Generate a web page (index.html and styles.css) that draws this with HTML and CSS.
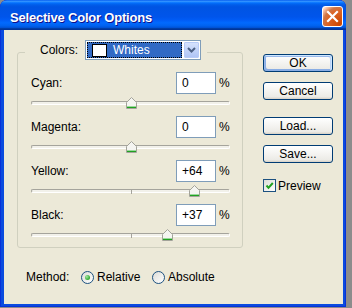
FILE: index.html
```html
<!DOCTYPE html>
<html>
<head>
<meta charset="utf-8">
<title>Selective Color Options</title>
<link rel="stylesheet" href="styles.css">
</head>
<body>
<div class="window">
  <div class="titlebar">
    <span class="title">Selective Color Options</span>
    <span class="close"><svg width="21" height="21" viewBox="0 0 21 21"><path d="M6 6 L15 15 M15 6 L6 15" stroke="#fff" stroke-width="2.2" stroke-linecap="square"/></svg></span>
  </div>
  <div class="client">
    <div class="top">
      <fieldset class="group">
        <legend class="legend">
          <span class="legend-label">Colors:</span>
          <span class="combo">
            <span class="combo-sel"><span class="swatch"></span><span class="combo-text">Whites</span></span>
            <span class="combo-btn"><svg width="9" height="6" viewBox="0 0 9 6"><path d="M1 1 L4.5 4.5 L8 1" fill="none" stroke="#4D6185" stroke-width="2"/></svg></span>
          </span>
        </legend>
        <div class="rows">
          <div class="row">
            <div class="row-head"><span class="lbl">Cyan:</span><span class="field">0</span><span class="pct">%</span></div>
            <div class="slider"><div class="track"></div><span class="tick"></span><span class="thumb" style="left: calc(50% - 5px)"><svg width="11" height="12" viewBox="0 0 11 12"><path d="M0.5 5.5 L5.5 0.5 L10.5 5.5 V11.5 H0.5 Z" fill="#F5F5F1" stroke="#A3A39A"/><path d="M1 9.5 H10" stroke="#9CD89C"/><path d="M1 10.5 H10" stroke="#21A121"/></svg></span></div>
          </div>
          <div class="row">
            <div class="row-head"><span class="lbl">Magenta:</span><span class="field">0</span><span class="pct">%</span></div>
            <div class="slider"><div class="track"></div><span class="tick"></span><span class="thumb" style="left: calc(50% - 5px)"><svg width="11" height="12" viewBox="0 0 11 12"><path d="M0.5 5.5 L5.5 0.5 L10.5 5.5 V11.5 H0.5 Z" fill="#F5F5F1" stroke="#A3A39A"/><path d="M1 9.5 H10" stroke="#9CD89C"/><path d="M1 10.5 H10" stroke="#21A121"/></svg></span></div>
          </div>
          <div class="row">
            <div class="row-head"><span class="lbl">Yellow:</span><span class="field">+64</span><span class="pct">%</span></div>
            <div class="slider"><div class="track"></div><span class="tick"></span><span class="thumb" style="left: calc(82% - 5px)"><svg width="11" height="12" viewBox="0 0 11 12"><path d="M0.5 5.5 L5.5 0.5 L10.5 5.5 V11.5 H0.5 Z" fill="#F5F5F1" stroke="#A3A39A"/><path d="M1 9.5 H10" stroke="#9CD89C"/><path d="M1 10.5 H10" stroke="#21A121"/></svg></span></div>
          </div>
          <div class="row">
            <div class="row-head"><span class="lbl">Black:</span><span class="field">+37</span><span class="pct">%</span></div>
            <div class="slider"><div class="track"></div><span class="tick"></span><span class="thumb" style="left: calc(68.5% - 5px)"><svg width="11" height="12" viewBox="0 0 11 12"><path d="M0.5 5.5 L5.5 0.5 L10.5 5.5 V11.5 H0.5 Z" fill="#F5F5F1" stroke="#A3A39A"/><path d="M1 9.5 H10" stroke="#9CD89C"/><path d="M1 10.5 H10" stroke="#21A121"/></svg></span></div>
          </div>
        </div>
      </fieldset>
      <div class="buttons">
        <span class="btn btn-default">OK</span>
        <span class="btn btn-cancel">Cancel</span>
        <span class="btn btn-load">Load...</span>
        <span class="btn btn-save">Save...</span>
        <span class="check-row"><span class="checkbox"><svg width="11" height="11" viewBox="0 0 11 11"><path d="M2.5 5.5 L4.5 7.8 L8.8 3" fill="none" stroke="#21A121" stroke-width="2"/></svg></span><span>Preview</span></span>
      </div>
    </div>
    <div class="method">
      <span class="method-label">Method:</span>
      <span class="opt opt-first"><span class="radio checked"><span class="dot"></span></span><span>Relative</span></span>
      <span class="opt"><span class="radio"></span><span>Absolute</span></span>
    </div>
  </div>
</div>
</body>
</html>
```
FILE: styles.css
```css
* { box-sizing: border-box; }
html, body { margin: 0; padding: 0; }
body {
  width: 352px;
  height: 308px;
  overflow: hidden;
  background: #8c8c8c;
  font-family: "Liberation Sans", Arial, sans-serif;
  font-size: 12px;
  color: #000;
}
.window {
  width: 346px;
  height: 307px;
  display: flex;
  flex-direction: column;
  border-radius: 7px 7px 0 0;
  background: #0A4BDF;
  box-shadow: inset 1px 0 #0831D9, inset -1px 0 #0831D9, inset 0 -1px #0831D9;
  overflow: hidden;
}
.titlebar {
  height: 30px;
  flex: none;
  display: flex;
  justify-content: space-between;
  align-items: flex-start;
  padding: 0 3px 0 10px;
  background: linear-gradient(180deg, #0058EE 0%, #3593FF 4%, #288EFF 6%, #127DFF 8%, #036FFC 10%, #0262EE 14%, #0057E5 20%, #0054E3 24%, #0055EB 56%, #005BF5 66%, #026AFE 76%, #0062EF 86%, #0052D6 92%, #0040AB 94%, #003092 100%);
  border-radius: 7px 7px 0 0;
}
.title {
  padding-top: 10px;
  line-height: 16px;
  font-size: 13px;
  font-weight: bold;
  letter-spacing: -0.2px;
  color: #fff;
  text-shadow: 1px 1px #0F1089;
}
.close {
  margin-top: 6px;
  width: 21px;
  height: 21px;
  border: 1px solid #fff;
  border-radius: 3px;
  background: radial-gradient(circle at 90% 90%, #CC4600 0%, #DC6527 55%, #CD7546 70%, #FFCCB2 90%, #fff 100%);
  display: flex;
  align-items: center;
  justify-content: center;
}
.close svg { display: block; margin: -1px; }
.client {
  flex: 1;
  margin: 0 3px 3px 4px;
  background: #ECE9D8;
  display: flex;
  flex-direction: column;
}
.top {
  display: flex;
  padding: 10px 0 0 13px;
}
.group {
  width: 226px;
  height: 208px;
  margin: 0;
  padding: 0 12px 0 13px;
  border: 1px solid #D0D0BF;
  border-radius: 3px;
  flex: none;
  min-width: 0;
}
.legend {
  margin-left: -6px;
  padding: 0 6px 4px 15px;
  display: flex;
  align-items: center;
  height: 24px;
}
.legend-label {
  width: 45px;
  height: 20px;
  line-height: 20px;
}
.combo {
  width: 116px;
  height: 20px;
  border: 1px solid #7F9DB9;
  background: #fff;
  padding: 1px;
  display: flex;
}
.combo-sel {
  flex: 1;
  background: #316AC5;
  outline: 1px dotted #000;
  outline-offset: -1px;
  display: flex;
  align-items: center;
  padding-left: 5px;
  margin-right: 2px;
}
.swatch {
  width: 15px;
  height: 13px;
  border: 1px solid #000;
  background: #fff;
  margin-right: 6px;
}
.combo-text { color: #fff; }
.combo-btn {
  width: 15px;
  border: 1px solid #B8CBF7;
  border-radius: 1px;
  background: linear-gradient(180deg, #D6E2FD, #BED0F8 60%, #B0C5F5);
  display: flex;
  align-items: center;
  justify-content: center;
}
.rows {
  margin-top: 8px;
  display: flex;
  flex-direction: column;
  gap: 2px;
}
.row { display: flex; flex-direction: column; }
.row-head {
  height: 22px;
  display: flex;
  align-items: center;
}
.lbl { flex: 1; }
.field {
  width: 40px;
  height: 22px;
  border: 1px solid #7F9DB9;
  background: #fff;
  padding-left: 5px;
  line-height: 20px;
}
.pct {
  width: 11px;
  margin-left: 3px;
}
.slider {
  height: 20px;
  position: relative;
}
.track {
  margin-top: 7px;
  height: 4px;
  border: 1px solid;
  border-color: #A5A49C #fff #fff #A5A49C;
  border-radius: 2px;
  background: #F2F1EA;
}
.tick {
  position: absolute;
  left: 50%;
  top: 8px;
  width: 1px;
  height: 4px;
  background: #A5A49C;
}
.thumb {
  position: absolute;
  top: 3px;
  width: 11px;
  height: 12px;
}
.thumb svg { display: block; }
.buttons {
  margin: 14px 0 0 20px;
  width: 70px;
  display: flex;
  flex-direction: column;
}
.btn {
  height: 18px;
  border: 1px solid #003C74;
  border-radius: 3px;
  background: linear-gradient(180deg, #fff, #ECEBE6 86%, #D6D0C5);
  text-align: center;
  line-height: 16px;
}
.btn-default {
  box-shadow: inset -1px 1px #CEE7FF, inset 1px 2px #98B8EA, inset -2px 2px #BCD4F6, inset 1px -1px #89ADE4, inset 2px -2px #89ADE4;
}
.btn-cancel { margin-top: 10px; }
.btn-load { margin-top: 17px; }
.btn-save { margin-top: 10px; }
.check-row {
  margin-top: 16px;
  display: flex;
  align-items: center;
  gap: 2px;
  height: 13px;
}
.checkbox {
  width: 13px;
  height: 13px;
  border: 1px solid #1C5180;
  background: linear-gradient(135deg, #DCDCD7, #fff);
  display: flex;
  align-items: center;
  justify-content: center;
}
.checkbox svg { display: block; }
.method {
  margin-top: 20px;
  padding-left: 22px;
  height: 18px;
  display: flex;
  align-items: center;
}
.method-label { width: 55px; }
.opt {
  display: flex;
  align-items: center;
  gap: 3px;
}
.opt-first { width: 71px; }
.radio {
  width: 13px;
  height: 13px;
  border: 1px solid #1C5180;
  border-radius: 50%;
  background: linear-gradient(135deg, #DCDCD7, #fff);
  display: flex;
  align-items: center;
  justify-content: center;
}
.dot {
  width: 5px;
  height: 5px;
  border-radius: 50%;
  background: radial-gradient(circle at 35% 35%, #A2E6A1, #21A121 80%);
}
```
